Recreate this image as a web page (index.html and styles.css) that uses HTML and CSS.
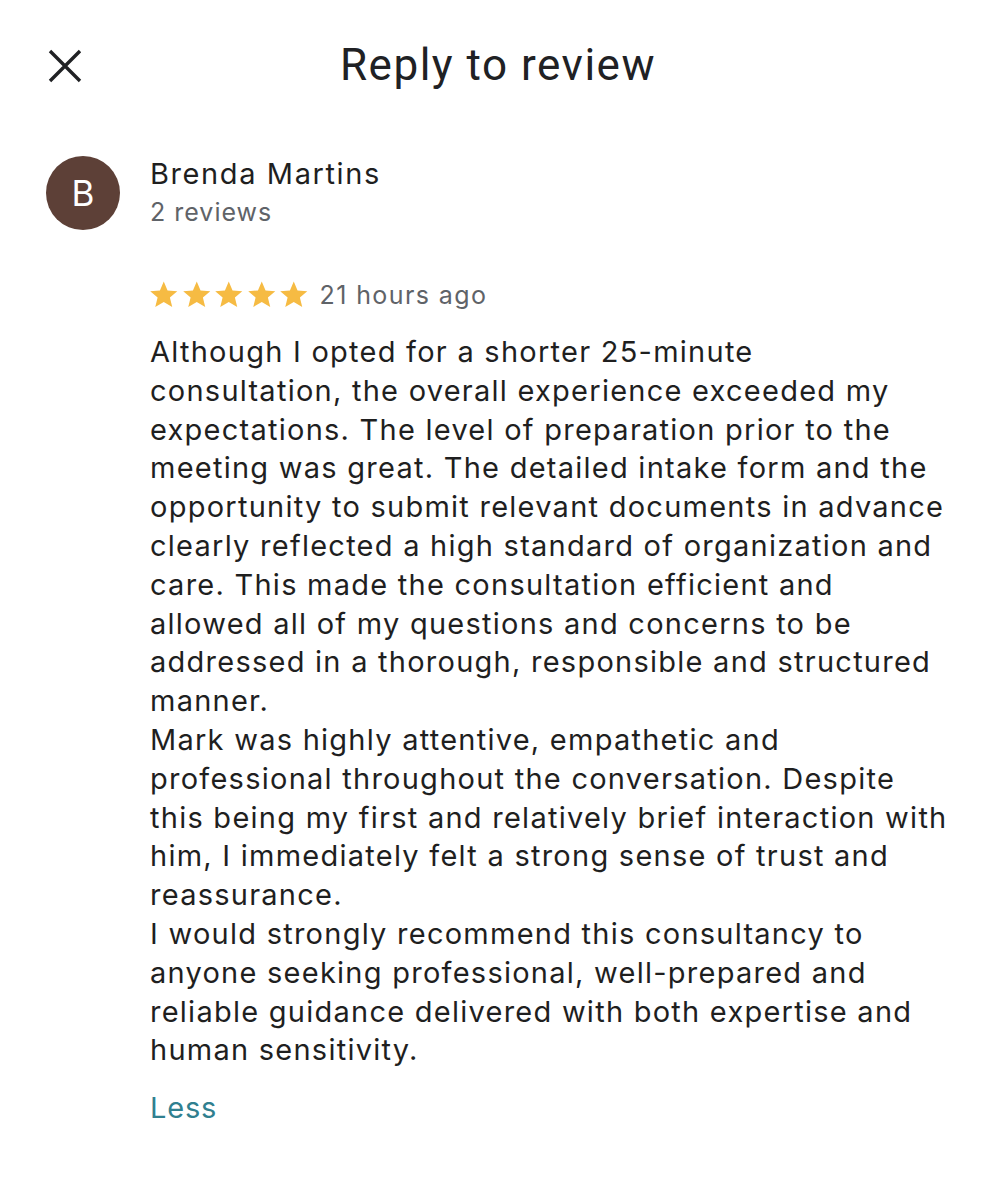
FILE: index.html
```html
<!DOCTYPE html>
<html lang="en">
  <head>
    <meta charset="UTF-8" />
    <meta name="viewport" content="width=device-width, initial-scale=1.0" />
    <title>Reply to review</title>
    <link rel="stylesheet" href="styles.css">
  </head>
  <body>
    <div class="header">
      <button class="close-btn" aria-label="Close">
        <svg width="34" height="34" viewBox="0 0 34 34">
          <path d="M2 2 L32 32 M32 2 L2 32" stroke="#202124" stroke-width="3.4" fill="none" />
        </svg>
      </button>
      <h1>Reply to review</h1>
    </div>

    <div class="review">
      <div class="reviewer">
        <div class="avatar">B</div>
        <div class="reviewer-info">
          <div class="name">Brenda Martins</div>
          <div class="count">2 reviews</div>
        </div>
      </div>

      <div class="review-body">
        <div class="meta">
          <div class="stars">
            <svg viewBox="0 0 24 24"><path d="M12 1.2l3.1 7.3 7.9.6-6 5.2 1.9 7.7L12 17.9 5.1 22l1.9-7.7-6-5.2 7.9-.6z" /></svg>
            <svg viewBox="0 0 24 24"><path d="M12 1.2l3.1 7.3 7.9.6-6 5.2 1.9 7.7L12 17.9 5.1 22l1.9-7.7-6-5.2 7.9-.6z" /></svg>
            <svg viewBox="0 0 24 24"><path d="M12 1.2l3.1 7.3 7.9.6-6 5.2 1.9 7.7L12 17.9 5.1 22l1.9-7.7-6-5.2 7.9-.6z" /></svg>
            <svg viewBox="0 0 24 24"><path d="M12 1.2l3.1 7.3 7.9.6-6 5.2 1.9 7.7L12 17.9 5.1 22l1.9-7.7-6-5.2 7.9-.6z" /></svg>
            <svg viewBox="0 0 24 24"><path d="M12 1.2l3.1 7.3 7.9.6-6 5.2 1.9 7.7L12 17.9 5.1 22l1.9-7.7-6-5.2 7.9-.6z" /></svg>
          </div>
          <span class="time">21 hours ago</span>
        </div>

        <p class="text">
          <span>Although I opted for a shorter 25-minute</span>
          <span>consultation, the overall experience exceeded my</span>
          <span>expectations. The level of preparation prior to the</span>
          <span>meeting was great. The detailed intake form and the</span>
          <span>opportunity to submit relevant documents in advance</span>
          <span>clearly reflected a high standard of organization and</span>
          <span>care. This made the consultation efficient and</span>
          <span>allowed all of my questions and concerns to be</span>
          <span>addressed in a thorough, responsible and structured</span>
          <span>manner.</span>
          <span>Mark was highly attentive, empathetic and</span>
          <span>professional throughout the conversation. Despite</span>
          <span>this being my first and relatively brief interaction with</span>
          <span>him, I immediately felt a strong sense of trust and</span>
          <span>reassurance.</span>
          <span>I would strongly recommend this consultancy to</span>
          <span>anyone seeking professional, well-prepared and</span>
          <span>reliable guidance delivered with both expertise and</span>
          <span>human sensitivity.</span>
        </p>

        <a class="less" href="#">Less</a>
      </div>
    </div>
  </body>
</html>
```

FILE: styles.css
```css
body {
  margin: 0;
  background-color: #fff;
  font-family: "Inter", "Liberation Sans", sans-serif;
  color: #1f1f1f;
}
.header {
  display: flex;
  align-items: center;
  justify-content: center;
  height: 130px;
  position: relative;
}
.close-btn {
  position: absolute;
  left: 48px;
  top: 49px;
  width: 34px;
  height: 34px;
  padding: 0;
  border: none;
  background: none;
  cursor: pointer;
}
.close-btn svg {
  display: block;
}
h1 {
  margin: 0;
  font-family: "Roboto", "Liberation Sans", sans-serif;
  font-weight: 400;
  font-size: 44px;
  color: #202124;
  letter-spacing: 1.5px;
}
.review {
  padding: 25px 46px 0 46px;
}
.reviewer {
  display: flex;
  align-items: center;
  gap: 30px;
}
.avatar {
  width: 74px;
  height: 74px;
  border-radius: 50%;
  background-color: #5d4037;
  color: #fff;
  display: flex;
  align-items: center;
  justify-content: center;
  font-size: 35px;
}
.name {
  font-size: 29px;
  line-height: 38px;
  color: #1f1f1f;
  letter-spacing: 1.6px;
}
.count {
  font-size: 25px;
  line-height: 38px;
  color: #5f6368;
  letter-spacing: 1px;
}
.review-body {
  padding-left: 104px;
}
.meta {
  display: flex;
  align-items: center;
  margin-top: 46px;
  height: 36px;
}
.stars {
  display: flex;
  gap: 3px;
  margin-left: -1px;
}
.stars svg {
  width: 29.5px;
  height: 29.5px;
  fill: #f6bb43;
}
.time {
  margin-left: 11px;
  font-size: 25px;
  color: #5f6368;
  letter-spacing: 1.4px;
}
.text {
  margin: 20px 0 0 0;
  font-size: 29px;
  line-height: 38.8px;
  letter-spacing: 1.25px;
}
.text span {
  display: block;
  white-space: nowrap;
}
.less {
  display: inline-block;
  margin-top: 19px;
  font-size: 29px;
  line-height: 38.8px;
  color: #30808f;
  text-decoration: none;
  letter-spacing: 0.8px;
}
```
